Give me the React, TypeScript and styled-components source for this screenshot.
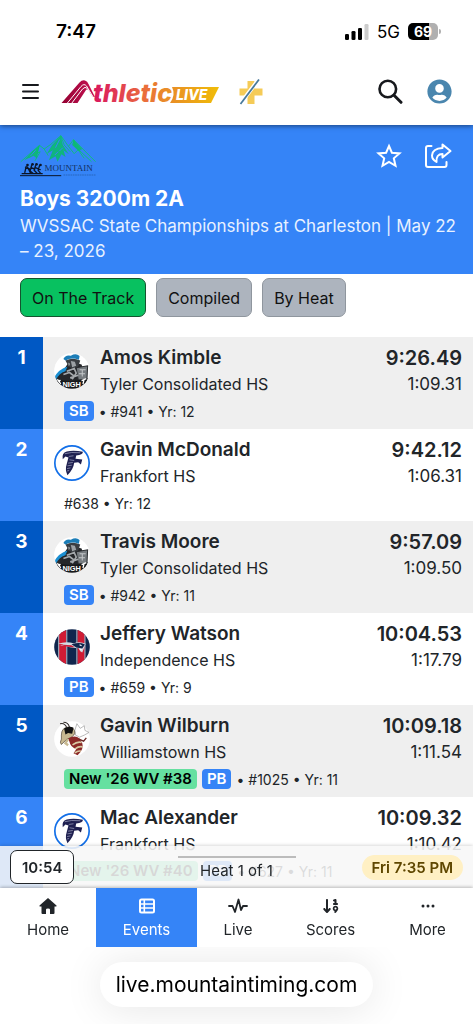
import React from "react";
import styled, { createGlobalStyle } from "styled-components";
import { FaArrowDown19 } from "react-icons/fa6";
import { FaUserCircle } from "react-icons/fa";

const Global = createGlobalStyle`
  *, *::before, *::after { box-sizing: border-box; }
  body { margin: 0; background: #fff; color: #212529; font-family: Inter, "Liberation Sans", sans-serif; font-size: 16px; }
  button { font: inherit; color: inherit; margin: 0; padding: 0; border: 0; background: none; cursor: pointer; }
  a { color: inherit; text-decoration: none; }
  svg { display: block; flex: none; }
  h1, h2, p, ol { margin: 0; padding: 0; }
`;

const Page = styled.div`
  min-height: 100vh;
  display: flex;
  flex-direction: column;
`;

const TopBar = styled.header`
  position: sticky;
  top: 0;
  z-index: 2;
  background: #fff;
  box-shadow: 0 1px 5px rgba(0, 0, 0, 0.5);
`;

const StatusBar = styled.div`
  display: flex;
  align-items: center;
  justify-content: space-between;
  height: 58px;
  padding: 5px 35px 0 56px;
  color: #000;
`;

const Clock = styled.span`
  font-size: 19px;
  font-weight: 600;
`;

const StatusIcons = styled.div`
  display: flex;
  align-items: center;
  gap: 8px;
  font-size: 17px;
`;

const Battery = styled.span`
  position: relative;
  width: 30px;
  height: 17px;
  border-radius: 5px;
  background: linear-gradient(90deg, #000 69%, #b0b0b0 69%);
  color: #fff;
  font-size: 14px;
  font-weight: 700;
  line-height: 17px;
  text-align: center;
  &::after {
    content: "";
    position: absolute;
    right: -3px;
    top: 6px;
    width: 2px;
    height: 5px;
    border-radius: 0 2px 2px 0;
    background: #b0b0b0;
  }
`;

const Brand = styled.div`
  display: flex;
  align-items: center;
  height: 67px;
  padding: 0 21px;
`;

const LogoLink = styled.a`
  margin-left: 22px;
`;

const PlusLink = styled.a`
  margin-left: 20px;
`;

const Actions = styled.div`
  display: flex;
  align-items: center;
  gap: 24px;
  margin-left: auto;
`;

const Hero = styled.section`
  padding: 10px 12px 10px 20px;
  background: #3584f7;
  color: #fff;
`;

const HeroTop = styled.div`
  display: flex;
  justify-content: space-between;
  height: 49px;
  padding-right: 9px;
`;

const HeroActions = styled.div`
  display: flex;
  align-items: flex-start;
  gap: 22px;
  padding-top: 8px;
`;

const Title = styled.h1`
  font-size: 21px;
  font-weight: 700;
  line-height: 30px;
`;

const Subtitle = styled.p`
  font-size: 17px;
  line-height: 25px;
  color: #e8f1ff;
`;

const Tabs = styled.div`
  display: flex;
  gap: 10px;
  padding: 4px 20px 20px;
`;

const Tab = styled.button<{ $active?: boolean }>`
  height: 39px;
  padding: 0 11px;
  border: 1px solid ${(p) => (p.$active ? "#14542f" : "#8f969e")};
  border-radius: 7px;
  background: ${(p) => (p.$active ? "#08c160" : "#adb4be")};
  color: #111;
  font-size: 16px;
`;

const Results = styled.ol`
  list-style: none;
`;

const Row = styled.li<{ $odd: boolean }>`
  display: flex;
  min-height: 92px;
  background: ${(p) => (p.$odd ? "#efefef" : "#fff")};
`;

const Place = styled.div<{ $odd: boolean }>`
  flex: none;
  width: 43px;
  padding-top: 8px;
  background: ${(p) => (p.$odd ? "#0058c4" : "#3584f7")};
  color: #fff;
  font-size: 19px;
  font-weight: 700;
  line-height: 26px;
  text-align: center;
`;

const Details = styled.div`
  flex: 1;
  min-width: 0;
  padding: 8px 11px 4px;
`;

const Main = styled.div`
  display: flex;
  align-items: center;
  gap: 10px;
`;

const Who = styled.div`
  flex: 1;
  min-width: 0;
`;

const Times = styled.div`
  text-align: right;
`;

const Name = styled.div`
  font-size: 19px;
  font-weight: 600;
  line-height: 26px;
  white-space: nowrap;
`;

const Time = styled(Name)`
  font-size: 20px;
`;

const School = styled.div`
  font-size: 16px;
  line-height: 26px;
  white-space: nowrap;
`;

const Split = styled(School)`
  font-size: 17px;
`;

const Meta = styled.div`
  display: flex;
  align-items: center;
  gap: 5px;
  height: 28px;
  padding-left: 10px;
  font-size: 14px;
`;

const Badge = styled.span<{ $rank?: boolean }>`
  padding: 0 5px;
  border-radius: 4px;
  background: ${(p) => (p.$rank ? "#66e0a0" : "#3584f7")};
  color: ${(p) => (p.$rank ? "#000" : "#fff")};
  font-size: 15px;
  font-weight: 600;
  line-height: 20px;
`;

const Dock = styled.footer`
  position: fixed;
  left: 0;
  right: 0;
  bottom: 0;
  z-index: 2;
`;

const HeatBar = styled.div`
  display: grid;
  grid-template-columns: 1fr auto 1fr;
  align-items: center;
  height: 42px;
  padding: 0 10px;
  background: rgba(247, 247, 247, 0.87);
  box-shadow: 0 -1px 3px rgba(0, 0, 0, 0.15);
`;

const ClockButton = styled.button`
  justify-self: start;
  height: 34px;
  padding: 0 11px;
  border: 1px solid #212529;
  border-radius: 7px;
  background: #fff;
  font-size: 15px;
  font-weight: 600;
`;

const Heat = styled.div`
  align-self: stretch;
  width: 118px;
  padding-top: 12px;
  text-align: center;
  font-size: 15px;
  line-height: 26px;
  background: linear-gradient(#bcbcbc, #bcbcbc) 0 10px / 100% 2px no-repeat;
`;

const Start = styled.span`
  justify-self: end;
  padding: 0 10px;
  border-radius: 13px;
  background: #fff0c4;
  color: #5f4700;
  font-size: 15px;
  font-weight: 600;
  line-height: 25px;
`;

const Nav = styled.nav`
  display: flex;
  height: 59px;
  background: #fff;
  box-shadow: 0 -1px 3px rgba(0, 0, 0, 0.25);
`;

const NavItem = styled.a<{ $active?: boolean; $grow: number }>`
  flex: ${(p) => p.$grow} 1 0;
  display: flex;
  flex-direction: column;
  align-items: center;
  gap: 3px;
  padding-top: 9px;
  background: ${(p) => (p.$active ? "#3584f7" : "transparent")};
  color: ${(p) => (p.$active ? "#fff" : "#212529")};
  font-size: 15px;
  line-height: 24px;
`;

const AddressArea = styled.div`
  display: flex;
  justify-content: center;
  height: 77px;
  padding-top: 15px;
  background: #fff;
  overflow: hidden;
`;

const Address = styled.button`
  height: 45px;
  padding: 0 16px;
  border-radius: 23px;
  background: #fff;
  box-shadow: 0 2px 40px rgba(0, 0, 0, 0.1);
  color: #000;
  font-size: 21px;
`;

function Signal() {
  return (
    <svg width="24" height="16" viewBox="0 0 24 16" aria-label="Signal">
      <rect x="0" y="10" width="4" height="6" rx="1.3" />
      <rect x="6.5" y="7" width="4" height="9" rx="1.3" />
      <rect x="13" y="4" width="4" height="12" rx="1.3" />
      <rect x="19.5" y="0" width="4" height="16" rx="1.3" fill="#ccc" />
    </svg>
  );
}

function MenuIcon() {
  return (
    <svg width="18" height="18" viewBox="0 0 18 18" stroke="#17191d" strokeWidth="2" strokeLinecap="round">
      <path d="M2 2H17M2 8.500H17M2 15H17" />
    </svg>
  );
}

function AthleticLogo() {
  return (
    <svg width="158" height="28" viewBox="0 0 158 28" role="img" aria-label="Athletic Live">
      <defs>
        <linearGradient id="word" gradientUnits="userSpaceOnUse" x1="30" x2="112" y1="0" y2="0">
          <stop offset="0" stopColor="#d8125f" />
          <stop offset="0.35" stopColor="#e23f52" />
          <stop offset="0.65" stopColor="#ea6c3c" />
          <stop offset="1" stopColor="#e99722" />
        </linearGradient>
        <linearGradient id="peak" x1="0" x2="1">
          <stop offset="0" stopColor="#930031" />
          <stop offset="1" stopColor="#c91355" />
        </linearGradient>
        <linearGradient id="flag" x1="0" x2="1">
          <stop offset="0" stopColor="#e98d25" />
          <stop offset="1" stopColor="#f0bd08" />
        </linearGradient>
      </defs>
      <path d="M0.500 25 18.500 4.500Q21 1.800 24 2.500Q26.500 3 27.500 6L34 19Q31.500 19 29.500 15.500Q27 9.500 25 12L16.500 25Z" fill="url(#peak)" />
      <path d="M6 25.500 20 8.500Q23 5 25.500 8L31.500 18M10.500 25.500 21.500 11Q24 8 26.500 10.500" fill="none" stroke="#fff" strokeWidth="1" />
      <path d="M111 9H158L150 25H109Q115 17 111 9Z" fill="url(#flag)" />
      <text x="32" y="24" fontFamily="Inter, sans-serif" fontSize="25" fontWeight="800" fontStyle="italic" fill="url(#word)">thletic</text>
      <text x="115" y="22" fontFamily="Inter, sans-serif" fontSize="14" fontWeight="800" fontStyle="italic" fill="#fff">LIVE</text>
    </svg>
  );
}

function PlusLogo() {
  return (
    <svg width="24" height="26" viewBox="0 0 24 26">
      <path d="M8.500 2H15.500V9.500H23.500V16.500H15.500V25H8.500V16.500H.5V9.500H8.500Z" fill="#f5cb57" />
      <path d="M1 25 20 0" stroke="#fff" strokeWidth="4" />
      <path d="M1.500 25 20 .5" stroke="#47799b" strokeWidth="1.800" />
    </svg>
  );
}

function SearchIcon() {
  return (
    <svg width="25" height="26" viewBox="0 0 25 26" fill="none" stroke="#17191d" strokeLinecap="round">
      <circle cx="9.800" cy="10" r="8.300" strokeWidth="2.600" />
      <path d="M16 16.300 23 23.300" strokeWidth="3" />
    </svg>
  );
}

function StarIcon() {
  return (
    <svg width="26" height="26" viewBox="0 0 26 26" fill="none" stroke="#fff" strokeWidth="2">
      <path d="M13 3 15.900 9.700 23.500 10.400 17.800 15.300 19.500 22.800 13 18.900 6.500 22.800 8.200 15.300 2.500 10.400 10.100 9.700Z" />
    </svg>
  );
}

function ShareIcon() {
  return (
    <svg width="28" height="26" viewBox="0 0 28 26" fill="none" stroke="#fff" strokeWidth="2" strokeLinecap="round" strokeLinejoin="round">
      <path d="M7.500 3H4Q2 3 2 5V22Q2 24 4 24H20.500Q22.500 24 22.500 22V19" />
      <path d="M18.500 1.500 26.500 8 18.500 14.500V11Q12 11 12.500 19Q8 16.500 8 12.500Q8.500 5.500 18.500 5Z" />
    </svg>
  );
}

function MountainLogo() {
  return (
    <svg width="77" height="42" viewBox="0 0 230 126" role="img" aria-label="Mountain Timing">
      <g fill="none" stroke="#08c66a" strokeWidth="2.500" strokeLinejoin="bevel">
        <path d="M2 80 58 31 72 42 92 28 122 2 145 34 160 14 226 80" />
        <path d="M58 31 50 55 60 50 44 78M72 42 84 62M38 50 28 68M145 34 162 56 174 44 192 70M160 14 166 36 184 52 214 80M122 2 132 30 150 50" />
      </g>
      <path d="M122 2 96 30 80 56 98 46 86 76 106 64 112 80 124 58 136 66 130 46 146 58 128 30Z M58 31 40 46 12 76 40 62 50 70Z M160 14 156 30 176 48 186 42Z" fill="#08bd68" opacity="0.85" />
      <path d="M118 14 106 38M114 50 104 60M128 38 118 48M46 46 30 64" stroke="#3584f7" strokeWidth="3" />
      <g fill="none" stroke="#0b1426" strokeWidth="4" strokeLinecap="round">
        <path d="M18 94 14 112M22 96 32 116M34 92 30 108 40 116M46 92 42 106 52 116M58 92 54 106 62 116M16 98 28 102M32 98 44 102M46 98 60 104M6 116 66 116" />
        <path d="M0 122H122" strokeWidth="3" />
      </g>
      <g fill="#0b1426">
        <circle cx="22" cy="90" r="4" /><circle cx="37" cy="88" r="4" /><circle cx="49" cy="88" r="4" /><circle cx="61" cy="90" r="4" />
      </g>
      <text x="73" y="109" fontFamily="Liberation Serif, serif" fontSize="27" fill="#14305e">MOUNTAIN</text>
      <path d="M130 120H226" stroke="#2866bd" strokeWidth="3" strokeDasharray="5 2" />
    </svg>
  );
}

function Knight() {
  return (
    <svg width="36" height="36" viewBox="0 0 107 107">
      <clipPath id="kc"><circle cx="53.500" cy="53.500" r="53" /></clipPath>
      <g clipPath="url(#kc)">
        <rect width="107" height="107" fill="#fff" />
        <path d="M0 78 34 42 46 24 82 34 90 60 96 90 0 98Z" fill="#25272a" />
        <path d="M1 72Q14 48 40 40L34 54Q14 60 6 80Z" fill="#1b8fd2" />
        <path d="M34 22Q56 12 78 22L72 40Q58 50 44 40Z" fill="#3a3e42" />
        <path d="M28 18Q34 4 50 8 66-1 76 9L74 20Q52 12 34 22Z" fill="#1c7db7" />
        <path d="M50 24 62 26 66 38 54 42ZM42 28 48 32 44 40Z" fill="#9ca1a5" />
        <path d="M66 44 100 38 98 78 72 80Z" fill="#777c80" stroke="#292c2f" strokeWidth="3" />
        <path d="M76 50H94M84 50V70M74 62H92" stroke="#c5c8ca" strokeWidth="3" />
        <path d="M38 54 60 46 66 60 54 78M28 64 46 58 62 70M48 74 72 66" stroke="#a4a8ab" strokeWidth="5" fill="none" />
        <path d="M8 76Q52 92 100 74L92 107H12Z" fill="#17191b" />
        <text x="25" y="102" fontFamily="Liberation Sans, sans-serif" fontSize="22" fontWeight="700" fill="#fff">NIGH</text>
        <path d="M10 78 20 92M19 80 14 87M90 77 86 92M82 82 96 76" stroke="#fff" strokeWidth="4" />
      </g>
    </svg>
  );
}

function Falcon() {
  return (
    <svg width="36" height="36" viewBox="0 0 107 107">
      <circle cx="53.500" cy="53.500" r="51" fill="#fff" stroke="#126fe8" strokeWidth="5" />
      <path d="M26 42Q22 24 38 19Q58 14 86 20Q86 30 66 31L64 41 84 43 80 58 72 51 60 53Q58 72 40 90Q32 74 38 56L43 37 34 34Z" fill="#1f2050" />
      <path d="M32 26Q50 20 78 23M44 34 58 32M46 44 60 46M42 54 56 52M40 62 53 60M39 70 49 68M39 77 45 76" stroke="#a8abc6" strokeWidth="2" fill="none" />
    </svg>
  );
}

function Patriot() {
  return (
    <svg width="36" height="36" viewBox="0 0 107 107">
      <clipPath id="pc"><circle cx="53.500" cy="53.500" r="53" /></clipPath>
      <g clipPath="url(#pc)">
        <rect width="107" height="107" fill="#10264d" />
        <path d="M15 0H36V107H15ZM70 0H91V107H70Z" fill="#cf1b34" />
        <path d="M14 0V107M38 0V107M68 0V107M92 0V107" stroke="#dce1e8" strokeWidth="2.500" />
        <path d="M12 44Q34 36 58 42 80 36 94 44L90 54 84 70 78 66 72 56Q48 58 34 50L18 50 28 46Z" fill="#d5dae2" />
        <path d="M52 45Q76 38 92 46L84 58 66 55Z" fill="#10264d" />
        <path d="M16 46 52 48 62 54Q42 55 28 50Z" fill="#c9203a" />
        <path d="M76 47 82 50M77 60 83 62" stroke="#fff" strokeWidth="3" />
      </g>
    </svg>
  );
}

function Wasp() {
  return (
    <svg width="36" height="36" viewBox="0 0 107 107">
      <circle cx="53.500" cy="53.500" r="53" fill="#fff" />
      <path d="M62 28 68 8 78 22 90 14 92 28 104 34 90 42 76 48 64 42Z" fill="#fff" stroke="#999" strokeWidth="2" />
      <path d="M18 8Q32 4 38 20M28 4Q42 4 46 18" stroke="#332d2a" strokeWidth="3" fill="none" />
      <path d="M22 42Q22 20 42 18 62 18 62 36 58 48 38 54L22 70Q16 64 22 54Z" fill="#c7b890" stroke="#4c4033" strokeWidth="2" />
      <path d="M30 22Q44 14 58 20L54 38 42 36 34 40Z" fill="#111" />
      <path d="M42 52Q62 40 76 52L84 66Q90 84 70 102L58 96 66 84Q48 76 46 62Z" fill="#8c2928" />
      <path d="M55 71Q70 60 82 64M63 83Q74 74 85 77M62 95Q72 87 80 90" stroke="#d9caa4" strokeWidth="5" fill="none" />
      <path d="M42 54 34 66 42 72" stroke="#c7b890" strokeWidth="7" fill="none" />
      <path d="M74 54 88 60 96 50" stroke="#6a2826" strokeWidth="4" fill="none" />
    </svg>
  );
}

function HomeIcon() {
  return (
    <svg width="20" height="18" viewBox="0 0 20 18">
      <path d="M10 1 18.500 8.500Q19 9.500 18 9.500H16.500V16Q16.500 17 15.500 17H12V12.500Q12 11.500 10 11.500T8 12.500V17H4.500Q3.500 17 3.500 16V9.500H2Q1 9.500 1.500 8.500Z" fill="currentColor" />
    </svg>
  );
}

function ListIcon() {
  return (
    <svg width="18" height="18" viewBox="0 0 18 18" fill="none" stroke="currentColor">
      <rect x="2" y="2.500" width="14" height="13" rx="1.500" strokeWidth="2" />
      <path d="M2 7H16M2 11H16M6.300 3V15" strokeWidth="1.600" />
    </svg>
  );
}

function PulseIcon() {
  return (
    <svg width="20" height="18" viewBox="0 0 20 18" fill="none" stroke="currentColor" strokeWidth="1.800" strokeLinecap="round" strokeLinejoin="round">
      <path d="M1 9H4.500L7 15 10.500 2.500 13 13 15 9H19" />
    </svg>
  );
}

function DotsIcon() {
  return (
    <svg width="18" height="18" viewBox="0 0 18 18" fill="currentColor">
      <circle cx="4" cy="9" r="1.500" /><circle cx="9" cy="9" r="1.500" /><circle cx="14" cy="9" r="1.500" />
    </svg>
  );
}

type Result = {
  name: string; school: string; time: string; split: string; meta: string;
  logo: React.ComponentType; rank?: string; best?: string;
};

const results: Result[] = [
  { name: "Amos Kimble", school: "Tyler Consolidated HS", time: "9:26.49", split: "1:09.31", meta: "#941 • Yr: 12", logo: Knight, best: "SB" },
  { name: "Gavin McDonald", school: "Frankfort HS", time: "9:42.12", split: "1:06.31", meta: "#638 • Yr: 12", logo: Falcon },
  { name: "Travis Moore", school: "Tyler Consolidated HS", time: "9:57.09", split: "1:09.50", meta: "#942 • Yr: 11", logo: Knight, best: "SB" },
  { name: "Jeffery Watson", school: "Independence HS", time: "10:04.53", split: "1:17.79", meta: "#659 • Yr: 9", logo: Patriot, best: "PB" },
  { name: "Gavin Wilburn", school: "Williamstown HS", time: "10:09.18", split: "1:11.54", meta: "#1025 • Yr: 11", logo: Wasp, rank: "New '26 WV #38", best: "PB" },
  { name: "Mac Alexander", school: "Frankfort HS", time: "10:09.32", split: "1:10.42", meta: "#627 • Yr: 11", logo: Falcon, rank: "New '26 WV #40", best: "PB" },
];

export default function App() {
  return (
    <Page>
      <Global />
      <TopBar>
        <StatusBar>
          <Clock>7:47</Clock>
          <StatusIcons>
            <Signal />
            <span>5G</span>
            <Battery>69</Battery>
          </StatusIcons>
        </StatusBar>
        <Brand>
          <button aria-label="Menu"><MenuIcon /></button>
          <LogoLink href="#home"><AthleticLogo /></LogoLink>
          <PlusLink href="#plus" aria-label="Plus"><PlusLogo /></PlusLink>
          <Actions>
            <button aria-label="Search"><SearchIcon /></button>
            <button aria-label="Account"><FaUserCircle size={25} color="#4a86ae" /></button>
          </Actions>
        </Brand>
      </TopBar>
      <main>
        <Hero>
          <HeroTop>
            <MountainLogo />
            <HeroActions>
              <button aria-label="Favorite"><StarIcon /></button>
              <button aria-label="Share"><ShareIcon /></button>
            </HeroActions>
          </HeroTop>
          <Title>Boys 3200m 2A</Title>
          <Subtitle>WVSSAC State Championships at Charleston | May 22 – 23, 2026</Subtitle>
        </Hero>
        <Tabs>
          <Tab $active>On The Track</Tab>
          <Tab>Compiled</Tab>
          <Tab>By Heat</Tab>
        </Tabs>
        <Results>
          {results.map((r, i) => {
            const odd = i % 2 === 0;
            const Logo = r.logo;
            return (
              <Row key={r.name} $odd={odd}>
                <Place $odd={odd}>{i + 1}</Place>
                <Details>
                  <Main>
                    <Logo />
                    <Who>
                      <Name>{r.name}</Name>
                      <School>{r.school}</School>
                    </Who>
                    <Times>
                      <Time>{r.time}</Time>
                      <Split>{r.split}</Split>
                    </Times>
                  </Main>
                  <Meta>
                    {r.rank && <Badge $rank>{r.rank}</Badge>}
                    {r.best && <Badge>{r.best}</Badge>}
                    <span>{r.best ? "• " : ""}{r.meta}</span>
                  </Meta>
                </Details>
              </Row>
            );
          })}
        </Results>
      </main>
      <Dock>
        <HeatBar>
          <ClockButton>10:54</ClockButton>
          <Heat>Heat 1 of 1</Heat>
          <Start>Fri 7:35 PM</Start>
        </HeatBar>
        <Nav>
          <NavItem href="#home" $grow={96}><HomeIcon />Home</NavItem>
          <NavItem href="#events" $grow={101} $active><ListIcon />Events</NavItem>
          <NavItem href="#live" $grow={82}><PulseIcon />Live</NavItem>
          <NavItem href="#scores" $grow={103}><FaArrowDown19 size={18} />Scores</NavItem>
          <NavItem href="#more" $grow={91}><DotsIcon />More</NavItem>
        </Nav>
        <AddressArea>
          <Address>live.mountaintiming.com</Address>
        </AddressArea>
      </Dock>
    </Page>
  );
}
